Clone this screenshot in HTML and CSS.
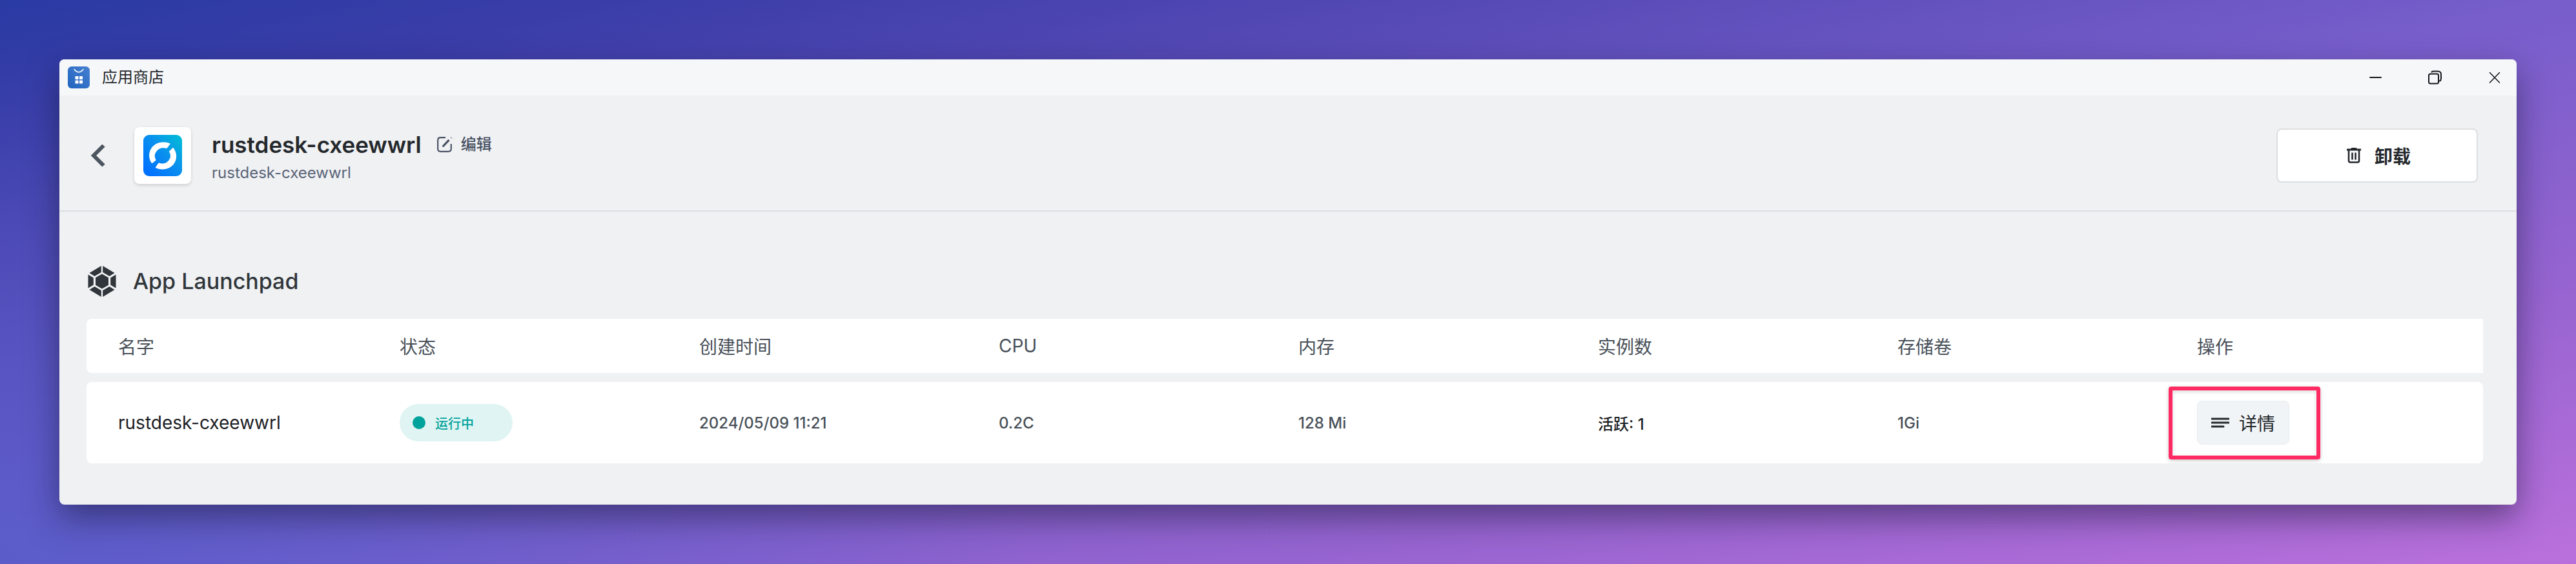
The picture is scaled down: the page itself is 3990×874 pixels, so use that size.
FILE: index.html
```html
<!DOCTYPE html>
<html lang="zh-CN">
<head>
<meta charset="utf-8">
<title>应用商店</title>
<link rel="stylesheet" href="styles.css">
</head>
<body>
<main class="window">
  <div class="titlebar">
    <svg class="store-icon" viewBox="0 0 34 34" aria-hidden="true">
      <defs><linearGradient id="store" x1="0" y1="1" x2="1" y2="0"><stop offset="0" stop-color="#2064bf"/><stop offset="1" stop-color="#4680d0"/></linearGradient></defs>
      <rect width="34" height="34" rx="6" fill="url(#store)"/>
      <path d="M10 4.500Q17 13 24 4.500" fill="none" stroke="#fff" stroke-width="1.600" stroke-linecap="round"/>
      <path d="M11.500 15h5v5h-5zM18 15h5v5h-5zM11.500 21.500h5v5h-5zM18 21.500h5v5h-5z" fill="#fff"/>
    </svg>
    <span class="titlebar-name">应用商店</span>
    <div class="window-controls">
      <button type="button" aria-label="最小化"><svg viewBox="0 0 24 24"><path d="M3 12h17"/></svg></button>
      <button type="button" aria-label="还原"><svg viewBox="0 0 24 24"><rect x="2" y="6.500" width="15" height="15" rx="2.500"/><path d="M6.500 3.500Q7.500 2.500 9 2.500h7q5 0 5 5v6q0 3-2 4"/></svg></button>
      <button type="button" aria-label="关闭"><svg viewBox="0 0 24 24"><path d="M4.500 4.500l15 15.500M19.500 4.500L4.500 20" stroke-width="1.600"/></svg></button>
    </div>
  </div>

  <header class="app-header">
    <button type="button" class="back" aria-label="返回"><svg viewBox="0 0 22 36"><path d="M19.500 2.500L4 18l15.500 15.500"/></svg></button>
    <div class="app-logo">
      <svg viewBox="0 0 60 64" aria-hidden="true">
        <defs><linearGradient id="logo" x1=".1" y1=".9" x2="1" y2="0"><stop offset="0" stop-color="#0070ff"/><stop offset=".5" stop-color="#0a90ee"/><stop offset="1" stop-color="#00c0d4"/></linearGradient></defs>
        <rect width="60" height="64" rx="9" fill="url(#logo)"/>
        <g fill="#fff" stroke="#fff" stroke-width="2" stroke-linejoin="round">
          <path d="M13.500 43C3 27 18 6 40.500 14L36 20C22 16 13 29 18.500 39Z"/>
          <path d="M46 21C58 38 42 59 20 50.500L24 44.500C38 49 47 35 41 26Z"/>
        </g>
      </svg>
    </div>
    <div class="app-title">
      <div class="title-line">
        <h1>rustdesk-cxeewwrl</h1>
        <button type="button" class="edit"><svg viewBox="0 0 24 24" aria-hidden="true"><path d="M13 2H6Q2 2 2 6v12q0 4 4 4h11q4 0 4-4v-7"/><path d="M9 15L18 5.500M21 2.500l.5-.5" stroke-width="3"/></svg>编辑</button>
      </div>
      <p>rustdesk-cxeewwrl</p>
    </div>
    <button type="button" class="uninstall"><svg viewBox="0 0 24 26" aria-hidden="true"><path d="M8.500 1h7l1.500 1.500h6v3H1v-3h6z" fill="currentColor"/><path d="M4 5v16q0 2.500 2.500 2.500h11q2.500 0 2.500-2.500V5M9.500 8.500v11M14.500 8.500v11" fill="none" stroke="currentColor" stroke-width="2.600"/></svg>卸载</button>
  </header>

  <section class="content">
    <h2>
      <svg viewBox="0 0 44 48" aria-hidden="true">
        <path d="M20.800 0v10L10.500 16 2.500 11zM23.200 0v10L33.500 16l8-5zM.5 13.500L8.800 18.500v11L.5 34.500zM43.500 13.500L35.200 18.500v11l8.300 5zM20.800 48V38L10.500 32l-8 5zM23.200 48V38L33.500 32l8 5zM22 12.500L32 18.300v11.400L22 35.500 12 29.700V18.300z"/>
      </svg>
      App Launchpad
    </h2>
    <table>
      <thead>
        <tr><th scope="col">名字</th><th scope="col">状态</th><th scope="col">创建时间</th><th scope="col">CPU</th><th scope="col">内存</th><th scope="col">实例数</th><th scope="col">存储卷</th><th scope="col">操作</th></tr>
      </thead>
      <tbody>
        <tr>
          <td class="name">rustdesk-cxeewwrl</td>
          <td><span class="status">运行中</span></td>
          <td>2024/05/09 11:21</td>
          <td>0.2C</td>
          <td>128 Mi</td>
          <td class="replicas">活跃: 1</td>
          <td>1Gi</td>
          <td><span class="highlight"><button type="button" class="details"><svg viewBox="0 0 28 16" aria-hidden="true"><path d="M1 2h26M1 8h26M1 14h18"/></svg>详情</button></span></td>
        </tr>
      </tbody>
    </table>
  </section>
</main>
</body>
</html>
```
FILE: styles.css
```css
* { box-sizing: border-box; }

body {
  margin: 0;
  min-height: 100vh;
  padding: 92px;
  font-family: Inter, "Noto Sans CJK SC", sans-serif;
  color: #24282c;
  background:
    radial-gradient(ellipse 40% 90% at 0% 100%, rgba(84, 92, 202, 0.8), rgba(84, 92, 202, 0)),
    linear-gradient(to bottom right, #2a3ba4 0%, #3a3da8 12%, #5348b4 27%, #775ecb 50%, #9664d0 75%, #ba70dc 100%);
}

h1, h2, p { margin: 0; }

button {
  font: inherit;
  color: inherit;
  border: 0;
  padding: 0;
  background: none;
  display: inline-flex;
  align-items: center;
  justify-content: center;
}

.window {
  border-radius: 8px;
  overflow: hidden;
  background: #f0f1f3;
  box-shadow: 0 20px 50px rgba(20, 20, 50, 0.5);
}

.titlebar {
  display: flex;
  align-items: center;
  height: 56px;
  padding: 0 0 0 13px;
  background: #f6f7f9;
  font-size: 24px;
}
.store-icon { width: 34px; height: 34px; }
.titlebar-name { margin-left: 19px; line-height: 32px; }
.window-controls { display: flex; gap: 24px; margin-left: auto; }
.window-controls button { width: 68px; height: 56px; }
.window-controls svg { width: 24px; height: 24px; fill: none; stroke: #16191c; stroke-width: 2; stroke-linecap: round; }

.app-header {
  display: flex;
  align-items: center;
  height: 180px;
  padding: 8px 60px 0 49px;
  border-bottom: 2px solid #dcdee1;
}
.back svg { width: 22px; height: 36px; fill: none; stroke: #4c5660; stroke-width: 6; }
.app-logo {
  display: flex;
  align-items: center;
  justify-content: center;
  width: 88px;
  height: 88px;
  margin-left: 45px;
  border-radius: 8px;
  background: #fff;
  box-shadow: 0 2px 5px rgba(0, 0, 0, 0.15);
}
.app-logo svg { width: 60px; height: 64px; }
.app-title { margin-left: 32px; padding-top: 6px; }
.title-line { display: flex; align-items: center; }
h1 { font-size: 35px; line-height: 48px; font-weight: 600; }
.edit { gap: 12px; margin-left: 23px; font-size: 24px; line-height: 32px; font-weight: 500; color: #485264; }
.edit svg { width: 26px; height: 26px; fill: none; stroke: currentColor; stroke-width: 2; }
.app-title p { font-size: 24px; line-height: 40px; color: #5a6478; }
.uninstall {
  gap: 20px;
  width: 312px;
  height: 84px;
  margin-left: auto;
  padding-left: 4px;
  border: 2px solid #dcdee1;
  border-radius: 8px;
  background: #fff;
  font-size: 28px;
  font-weight: 700;
}
.uninstall svg { width: 24px; height: 26px; }

.content { padding: 78px 52px 50px 42px; }
h2 {
  display: flex;
  align-items: center;
  gap: 26px;
  padding-left: 2px;
  font-size: 34px;
  line-height: 60px;
  font-weight: 500;
  color: #30363b;
}
h2 svg { width: 44px; height: 48px; fill: #30363b; }

table {
  width: 100%;
  margin-top: 14px;
  table-layout: fixed;
  border-collapse: separate;
  border-spacing: 0 14px;
}
th, td { padding: 0 0 0 21px; background: #fff; text-align: left; }
th { height: 84px; font-size: 28px; font-weight: 400; color: #485058; }
td { height: 126px; font-size: 24px; font-weight: 500; color: #485058; }
th:first-child, td:first-child { padding-left: 49px; border-radius: 8px 0 0 8px; }
td:last-child { border-radius: 0 8px 8px 0; }
td.name { font-size: 28px; font-weight: 400; color: #1c2024; }
td.replicas { color: #1c2024; }

.status {
  display: flex;
  align-items: center;
  gap: 15px;
  width: 175px;
  height: 58px;
  padding-left: 20px;
  border-radius: 30px;
  background: #e0f4f3;
  color: #00a39b;
  font-size: 20px;
}
.status::before { content: ""; width: 20px; height: 20px; border-radius: 50%; background: #00a39b; }

.highlight {
  display: inline-flex;
  margin: 0 -44px;
  padding: 16px 42px 17px 38px;
  border: 6px solid #ff2a62;
  border-radius: 4px;
  box-shadow: 0 2px 6px rgba(0, 0, 0, 0.2), inset 0 2px 6px rgba(0, 0, 0, 0.15);
}
.details {
  gap: 15px;
  width: 143px;
  height: 68px;
  border: 1px solid #e8ebee;
  border-radius: 8px;
  background: #f1f4f7;
  font-size: 28px;
  font-weight: 400;
  color: #24282c;
}
.details svg { width: 28px; height: 16px; fill: none; stroke: currentColor; stroke-width: 3; stroke-linecap: round; }
```
